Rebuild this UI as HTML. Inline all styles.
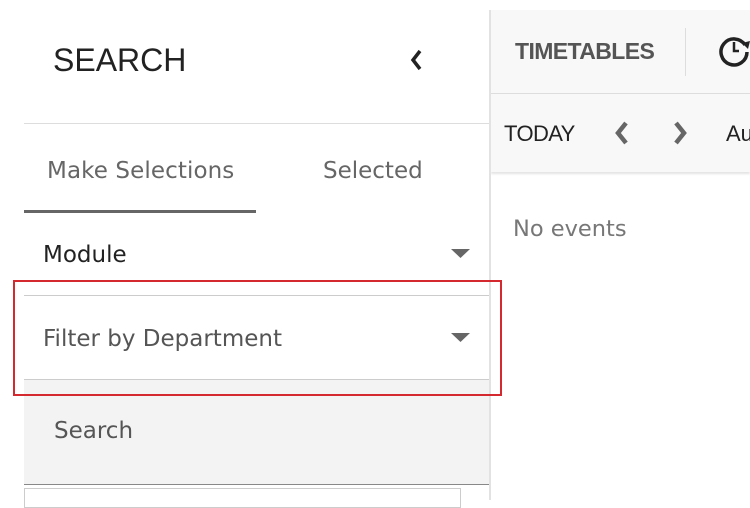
<!DOCTYPE html>
<html><head><style>
*{margin:0;padding:0;box-sizing:border-box}
body{width:750px;height:500px;overflow:hidden;background:#fff;font-family:"DejaVu Sans","Liberation Sans",sans-serif;position:relative}
.a{position:absolute;white-space:nowrap}
</style></head><body>
<div class="a" style="left:489px;top:10px;width:2px;height:490px;background:#e2e2e2"></div>
<div class="a" style="left:491px;top:10px;width:259px;height:83px;background:#f8f8f8"></div>
<div class="a" style="left:491px;top:93px;width:259px;height:1px;background:#ddd"></div>
<div class="a" style="left:491px;top:94px;width:259px;height:78px;background:#f8f8f8;box-shadow:0 2px 2px #e4e4e4"></div>
<div class="a" style="left:515px;top:38px;font-weight:bold;color:#555;letter-spacing:-0.6px;font-family:'Liberation Sans',sans-serif;font-size:23px">TIMETABLES</div>
<div class="a" style="left:685px;top:28px;width:1px;height:48px;background:#ddd"></div>
<svg class="a" style="left:718px;top:33px" width="32" height="34" viewBox="0 0 32 34"><path d="M27 12 A13 13 0 1 0 29 19" fill="none" stroke="#222" stroke-width="3.5"/><path d="M16 9v9h5" fill="none" stroke="#222" stroke-width="2.5"/><path d="M24 10l8-2-2 8z" fill="#222"/></svg>
<div class="a" style="left:504px;top:121px;color:#222;font-family:'Liberation Sans',sans-serif;font-size:22px;letter-spacing:-0.6px">TODAY</div>
<svg class="a" style="left:609px;top:119px" width="80" height="30"><path d="M17 4 L9 14 L17 24" fill="none" stroke="#666" stroke-width="4.5"/><path d="M67 4 L75 14 L67 24" fill="none" stroke="#666" stroke-width="4.5"/></svg>
<div class="a" style="left:726px;top:121px;font-size:22px;color:#222;font-family:'Liberation Sans',sans-serif">Au</div>
<div class="a" style="left:513px;top:216px;font-size:22.5px;color:#777">No events</div>

<div class="a" style="left:53px;top:42px;font-size:32px;color:#222;font-family:'Liberation Sans',sans-serif">SEARCH</div>
<svg class="a" style="left:406px;top:48px" width="20" height="24"><path d="M14 3 L7 12 L14 21" fill="none" stroke="#222" stroke-width="3.5"/></svg>
<div class="a" style="left:24px;top:123px;width:465px;height:1px;background:#ddd"></div>
<div class="a" style="left:47px;top:158px;font-size:23px;color:#666;letter-spacing:0.1px">Make Selections</div>
<div class="a" style="left:323px;top:158px;font-size:23px;color:#666">Selected</div>
<div class="a" style="left:24px;top:210px;width:232px;height:3px;background:#666"></div>
<div class="a" style="left:43px;top:242px;font-size:23px;color:#222">Module</div>
<svg class="a" style="left:451px;top:249px" width="20" height="10"><path d="M0 0h19l-9.5 9z" fill="#666"/></svg>
<div class="a" style="left:24px;top:295px;width:465px;height:1px;background:#ccc"></div>
<div class="a" style="left:43px;top:326px;font-size:23px;color:#555">Filter by Department</div>
<svg class="a" style="left:451px;top:333px" width="20" height="10"><path d="M0 0h19l-9.5 9z" fill="#666"/></svg>
<div class="a" style="left:24px;top:379px;width:465px;height:1px;background:#ccc"></div>
<div class="a" style="left:24px;top:380px;width:465px;height:104px;background:#f3f3f3"></div>
<div class="a" style="left:54px;top:418px;font-size:23px;color:#555">Search</div>
<div class="a" style="left:24px;top:484px;width:465px;height:1px;background:#888"></div>
<div class="a" style="left:24px;top:488px;width:437px;height:20px;border:1px solid #ccc"></div>
<div class="a" style="left:13px;top:280px;width:489px;height:116px;border:2px solid #d42a2f"></div>
</body></html>
